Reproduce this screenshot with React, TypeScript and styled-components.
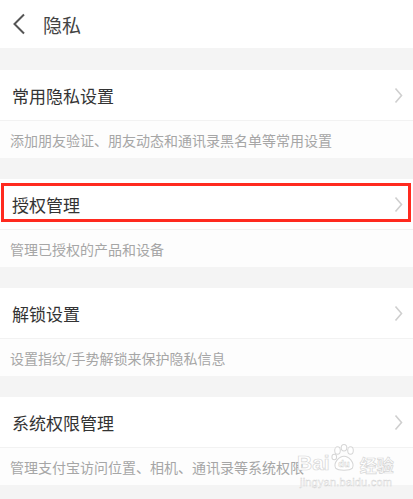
import React from "react";
import styled, { createGlobalStyle } from "styled-components";

const Global = createGlobalStyle`
  html, body { margin: 0; padding: 0; background: #f4f4f4; }
  body { font-family: "Noto Sans CJK SC", "Noto Sans", sans-serif; }
`;

const Page = styled.div`
  position: relative;
  width: 413px;
  height: 499px;
  overflow: hidden;
  background: #f4f4f4;
`;

const Header = styled.header`
  height: 48px;
  background: #fff;
  display: flex;
  align-items: center;
  padding-left: 12px;
  gap: 17px;
`;

const Title = styled.span`
  font-size: 19px;
  color: #444;
  line-height: 1;
`;

const Section = styled.section<{ $first?: boolean }>`
  margin-top: ${(p) => (p.$first ? 22 : 21)}px;
  background: #fff;
`;

const Row = styled.div`
  position: relative;
  height: 51px;
  display: flex;
  align-items: center;
  justify-content: space-between;
  padding: 0 10px 0 12px;
  border-bottom: 1px solid #f2f2f2;
  box-sizing: border-box;
`;

const RowLabel = styled.span`
  font-size: 17px;
  color: #333;
`;

const Desc = styled.div`
  height: 37px;
  display: flex;
  align-items: center;
  padding-left: 10px;
  font-size: 14px;
  color: #a6a6a6;
  background: #fdfdfd;
  white-space: nowrap;
  overflow: hidden;
`;

const Highlight = styled.div`
  position: absolute;
  left: 1px;
  right: 2px;
  top: 4px;
  height: 39px;
  border: 3px solid #ff2a1f;
  box-sizing: border-box;
  pointer-events: none;
`;

const Watermark = styled.div`
  position: absolute;
  left: 297px;
  top: 443px;
  width: 100px;
  display: flex;
  flex-direction: column;
  align-items: flex-start;
  pointer-events: none;
`;

const WmTop = styled.div`
  display: flex;
  align-items: flex-end;
  font-family: "Liberation Sans", Arial, sans-serif;
  font-size: 21px;
  font-weight: bold;
  color: #fff;
  -webkit-text-stroke: 0.7px #d6d6d6;
  line-height: 1;
`;

const WmCn = styled.span`
  font-family: "Noto Sans CJK SC", sans-serif;
  font-size: 17px;
  margin-left: 2px;
`;

const WmUrl = styled.div`
  margin-top: 3px;
  margin-left: 3px;
  font-family: "Liberation Sans", Arial, sans-serif;
  font-size: 11px;
  color: #fff;
  -webkit-text-stroke: 0.4px #d2d2d2;
  letter-spacing: 0.2px;
`;

const Back = () => (
  <svg width="14" height="22" viewBox="0 0 14 22">
    <polyline points="12,1.5 2.5,11 12,20.5" fill="none" stroke="#555" strokeWidth="2" />
  </svg>
);

const Chevron = () => (
  <svg width="9" height="17" viewBox="0 0 9 17">
    <polyline points="1.5,1.5 7.5,8.5 1.5,15.5" fill="none" stroke="#cfcfcf" strokeWidth="1.6" />
  </svg>
);

const Paw = () => (
  <svg width="26" height="30" viewBox="0 0 28 30" style={{ margin: "0 1px" }}>
    <g fill="#fff" stroke="#d6d6d6" strokeWidth="1.1">
      <ellipse cx="7" cy="7" rx="3" ry="4" />
      <ellipse cx="14" cy="4" rx="3" ry="3.5" />
      <ellipse cx="21" cy="7" rx="3" ry="4" />
      <ellipse cx="3.5" cy="14" rx="2.5" ry="3" />
      <path d="M5 26 C2 20 9 13 14 13 C19 13 26 20 23 26 C20 29 8 29 5 26 Z" />
    </g>
    <text x="14" y="25" textAnchor="middle" fontFamily="Liberation Sans, Arial, sans-serif" fontSize="10" fontWeight="bold" fill="#fff" stroke="#cfcfcf" strokeWidth="0.5">du</text>
  </svg>
);

const items = [
  { label: "常用隐私设置", desc: "添加朋友验证、朋友动态和通讯录黑名单等常用设置" },
  { label: "授权管理", desc: "管理已授权的产品和设备", highlight: true },
  { label: "解锁设置", desc: "设置指纹/手势解锁来保护隐私信息" },
  { label: "系统权限管理", desc: "管理支付宝访问位置、相机、通讯录等系统权限" },
];

export default function App() {
  return (
    <Page>
      <Global />
      <Header>
        <Back />
        <Title>隐私</Title>
      </Header>
      {items.map((it, i) => (
        <Section key={it.label} $first={i === 0}>
          <Row>
            <RowLabel>{it.label}</RowLabel>
            <Chevron />
            {it.highlight && <Highlight />}
          </Row>
          <Desc>{it.desc}</Desc>
        </Section>
      ))}
      <Watermark>
        <WmTop>
          <span>Bai</span>
          <Paw />
          <WmCn>经验</WmCn>
        </WmTop>
        <WmUrl>jingyan.baidu.com</WmUrl>
      </Watermark>
    </Page>
  );
}
